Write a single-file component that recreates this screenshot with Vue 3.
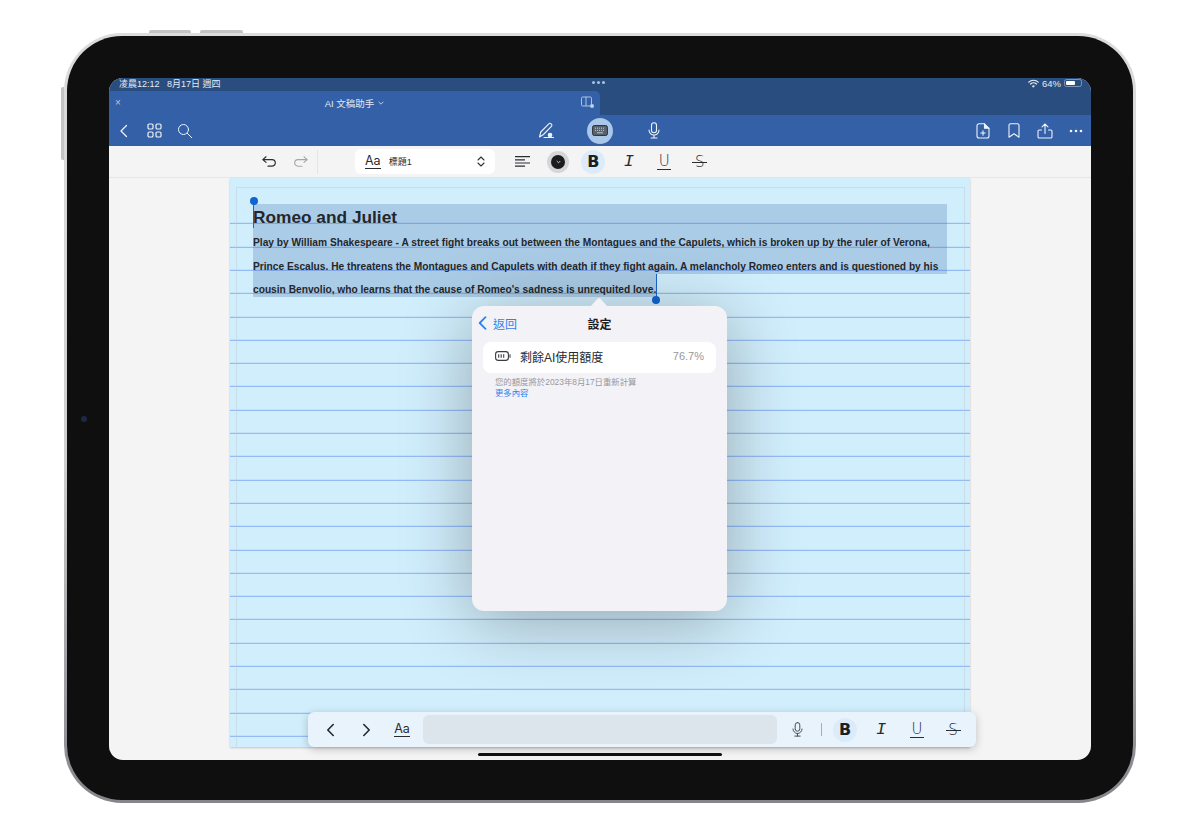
<template>
  <div class="device">
    <span class="hw hw-top hw-a"></span>
    <span class="hw hw-top hw-b"></span>
    <span class="hw hw-side"></span>
    <div class="bezel">
      <span class="camera"></span>
      <div class="screen">
        <!-- status bar -->
        <div class="status">
          <span class="status-left">凌晨12:12&nbsp;&nbsp;&nbsp;8月17日 週四</span>
          <span class="status-dots"><i></i><i></i><i></i></span>
          <span class="status-right">
            <svg width="11" height="9" viewBox="0 0 11 9" fill="none" stroke="#e8eef8" stroke-linecap="round">
              <path d="M.8 3.2a6.6 6.6 0 0 1 9.4 0" stroke-width="1.2" />
              <path d="M2.6 5a4 4 0 0 1 5.8 0" stroke-width="1.2" />
              <path d="M4.6 6.9a1.3 1.3 0 0 1 1.8 0L5.5 8z" fill="#e8eef8" stroke-width=".8" />
            </svg>
            <span class="pct">64%</span>
            <span class="battery"><b></b></span>
          </span>
        </div>

        <!-- window tab -->
        <div class="tabs">
          <div class="tab">
            <span class="tab-close">×</span>
            <span class="tab-title">
              AI 文稿助手
              <svg width="6" height="4" viewBox="0 0 6 4" fill="none" stroke="#cdd9ec" stroke-width=".9"><path d="M.6.8 3 3.2 5.4.8" /></svg>
            </span>
            <svg class="tab-split" width="14" height="13" viewBox="0 0 14 13" fill="none" stroke="#bccfe8" stroke-width=".9">
              <rect x=".5" y="1" width="10" height="9" rx="1.2" />
              <path d="M5 1v9" />
              <circle cx="11" cy="10" r="2" fill="#bccfe8" stroke="none" />
            </svg>
          </div>
        </div>

        <!-- main toolbar -->
        <div class="toolbar">
          <div class="tb-group tb-left">
            <span class="tb-btn">
              <svg width="10" height="14" viewBox="0 0 10 14" fill="none" stroke="#eef3fa" stroke-width="1.3" stroke-linecap="round" stroke-linejoin="round"><path d="M7.5 1.5 2 7l5.500 5.500" /></svg>
            </span>
            <span class="tb-btn">
              <svg width="15" height="15" viewBox="0 0 15 15" fill="none" stroke="#eef3fa" stroke-width="1.2">
                <rect x="1" y="1" width="5" height="5" rx="1.300" />
                <rect x="9" y="1" width="5" height="5" rx="1.300" />
                <rect x="1" y="9" width="5" height="5" rx="1.300" />
                <rect x="9" y="9" width="5" height="5" rx="1.300" />
              </svg>
            </span>
            <span class="tb-btn">
              <svg width="16" height="16" viewBox="0 0 16 16" fill="none" stroke="#eef3fa" stroke-width="1" stroke-linecap="round"><circle cx="6.500" cy="6.500" r="5" /><path d="m10.300 10.300 4.500 4.500" /></svg>
            </span>
          </div>
          <div class="tb-center">
            <span class="tb-mid">
              <svg width="17" height="17" viewBox="0 0 17 17" fill="none" stroke="#eef3fa" stroke-width="1.100" stroke-linejoin="round" stroke-linecap="round">
                <path d="M1.500 15 2.800 10 10.800 1.800a1.600 1.600 0 0 1 2.300 0l.3.300a1.600 1.600 0 0 1 0 2.300L5.500 12.500z" />
                <path d="M6 15.500h9.500" />
                <circle cx="12" cy="13" r="1.800" fill="#eef3fa" />
              </svg>
            </span>
            <span class="tb-mid">
              <span class="kbd-circle">
                <svg width="16" height="11" viewBox="0 0 16 11">
                  <rect x=".6" y=".6" width="14.800" height="9.800" rx="1.600" fill="#5a6470" stroke="#2b2f36" stroke-width="1" />
                  <path d="M3 3.200h10M3 5.400h10" stroke="#c3c9d1" stroke-width="1" stroke-dasharray="1 1" />
                  <path d="M5 7.800h6" stroke="#c3c9d1" stroke-width=".9" />
                </svg>
              </span>
            </span>
            <span class="tb-mid">
              <svg width="12" height="17" viewBox="0 0 12 17" fill="none" stroke="#eef3fa" stroke-width="1.100" stroke-linecap="round">
                <rect x="3.500" y=".8" width="5" height="10" rx="2.500" />
                <path d="M1 8a5 5 0 0 0 10 0M6 13v3M3 16h6" />
              </svg>
            </span>
          </div>
          <div class="tb-group tb-right">
            <span class="tb-btn">
              <svg width="14" height="16" viewBox="0 0 14 16" fill="none" stroke="#eef3fa" stroke-width="1.100" stroke-linejoin="round" stroke-linecap="round">
                <path d="M3 .8h5.500L13 5.300V13a2 2 0 0 1-2 2H3a2 2 0 0 1-2-2V2.800a2 2 0 0 1 2-2z" />
                <path d="M8.500.8v4.500H13" fill="#eef3fa" />
                <path d="M7 7.800v4.400M4.800 10h4.400" />
              </svg>
            </span>
            <span class="tb-btn">
              <svg width="12" height="15" viewBox="0 0 12 15" fill="none" stroke="#eef3fa" stroke-width="1.100" stroke-linejoin="round"><path d="M2.500.8h7A1.500 1.500 0 0 1 11 2.300v11.900L6 10.800l-5 3.400V2.300A1.500 1.500 0 0 1 2.500.8z" /></svg>
            </span>
            <span class="tb-btn">
              <svg width="16" height="16" viewBox="0 0 16 16" fill="none" stroke="#eef3fa" stroke-width="1.100" stroke-linecap="round" stroke-linejoin="round"><path d="M4.500 7H2.300A1.300 1.300 0 0 0 1 8.300v5.400A1.300 1.300 0 0 0 2.300 15h11.400a1.300 1.300 0 0 0 1.300-1.300V8.300A1.300 1.300 0 0 0 13.700 7h-2.200M8 10.500V1M5 3.800 8 1l3 2.800" /></svg>
            </span>
            <span class="tb-btn">
              <svg width="14" height="4" viewBox="0 0 14 4" fill="#eef3fa"><circle cx="2" cy="2" r="1.300" /><circle cx="7" cy="2" r="1.300" /><circle cx="12" cy="2" r="1.300" /></svg>
            </span>
          </div>
        </div>

        <!-- formatting bar -->
        <div class="format">
          <span class="undo">
            <svg width="15" height="11" viewBox="0 0 15 11" fill="none" stroke="#2a2d32" stroke-width="1.200" stroke-linecap="round" stroke-linejoin="round"><path d="M4 .8.800 3.600 4 6.400M1 3.600h9a3.300 3.300 0 0 1 0 6.600H6" /></svg>
          </span>
          <span class="undo">
            <svg width="15" height="11" viewBox="0 0 15 11" fill="none" stroke="#a3a6aa" stroke-width="1.100" stroke-linecap="round" stroke-linejoin="round"><path d="M11 .8l3.200 2.800L11 6.400M14 3.600H5a3.300 3.300 0 0 0 0 6.600h4" /></svg>
          </span>
          <span class="fmt-divider"></span>
          <div class="style-picker">
            <span class="aa">Aa</span>
            <span class="style-name">標題1</span>
            <svg class="updown" width="8" height="11" viewBox="0 0 8 11" fill="none" stroke="#2f3237" stroke-width="1.100" stroke-linecap="round" stroke-linejoin="round"><path d="M1 4 4 1l3 3M1 7l3 3 3-3" /></svg>
          </div>
          <span class="fmt-cell">
            <svg width="15" height="11" viewBox="0 0 15 11" stroke="#2a2d32" stroke-width="1.200"><path d="M0 .6h15M0 3.800h10M0 7h15M0 10.200h10" /></svg>
          </span>
          <span class="fmt-cell">
            <span class="swatch"><span class="swatch-in">
              <svg width="5" height="4" viewBox="0 0 5 4" fill="none" stroke="#d8d8d8" stroke-width=".9"><path d="M.7 1 2.500 2.800 4.300 1" /></svg>
            </span></span>
          </span>
          <span v-for="m in marks" :key="m.cls" class="fmt-cell">
            <span class="mark" :class="m.cls">{{ m.text }}</span>
          </span>
        </div>

        <!-- document -->
        <div class="doc">
          <div class="paper">
            <span class="margin-frame"></span>
            <span class="sel sel-a"></span>
            <span class="sel sel-b"></span>
            <span class="caret caret-a"></span>
            <span class="caret caret-b"></span>
            <span class="handle handle-a"></span>
            <span class="handle handle-b"></span>
            <h1 class="doc-title">Romeo and Juliet</h1>
            <p class="doc-body">
              Play by William Shakespeare - A street fight breaks out between the Montagues and the Capulets, which is broken up by the ruler of Verona, Prince Escalus. He threatens the Montagues and Capulets with death if they fight again. A melancholy Romeo enters and is questioned by his cousin Benvolio, who learns that the cause of Romeo's sadness is unrequited love.
            </p>
          </div>

          <!-- settings popover -->
          <div class="popover">
            <span class="arrow"></span>
            <div class="pop-nav">
              <span class="pop-back">
                <svg width="9" height="14" viewBox="0 0 9 14" fill="none" stroke="#2f83ee" stroke-width="1.800" stroke-linecap="round" stroke-linejoin="round"><path d="M7.500 1.200 1.700 7l5.800 5.800" /></svg>
                返回
              </span>
              <span class="pop-title">設定</span>
            </div>
            <div class="pop-card">
              <svg width="16" height="10" viewBox="0 0 16 10" fill="none" stroke="#3c3c40">
                <rect x=".6" y=".6" width="12.800" height="8.800" rx="2.600" stroke-width="1.100" />
                <path d="M3.700 3.200v3.600M6.200 3.200v3.600M8.700 3.200v3.600" stroke-width="1.100" />
                <path d="M15 3.800v2.400" stroke-width="1.100" stroke-linecap="round" />
              </svg>
              <span class="pop-label">剩餘AI使用額度</span>
              <span class="pop-value">76.7%</span>
            </div>
            <p class="pop-note">您的額度將於2023年8月17日重新計算</p>
            <p class="pop-more">更多內容</p>
          </div>

          <!-- floating bottom toolbar -->
          <div class="float-bar">
            <span class="fb-cell">
              <svg width="9" height="14" viewBox="0 0 9 14" fill="none" stroke="#25282c" stroke-width="1.600" stroke-linecap="round" stroke-linejoin="round"><path d="M7.200 1.500 1.800 7l5.400 5.500" /></svg>
            </span>
            <span class="fb-cell">
              <svg width="9" height="14" viewBox="0 0 9 14" fill="none" stroke="#25282c" stroke-width="1.600" stroke-linecap="round" stroke-linejoin="round"><path d="M1.800 1.500 7.200 7l-5.400 5.500" /></svg>
            </span>
            <span class="fb-cell"><span class="aa">Aa</span></span>
            <span class="fb-input"></span>
            <span class="fb-cell fb-mic">
              <svg width="11" height="15" viewBox="0 0 11 15" fill="none" stroke="#4a4d52" stroke-width="1" stroke-linecap="round">
                <rect x="3.200" y=".6" width="4.600" height="8.600" rx="2.300" />
                <path d="M1 7a4.500 4.500 0 0 0 9 0M5.500 11.500v2.600M2.800 14.100h5.400" />
              </svg>
            </span>
            <span class="fb-divider"><i></i></span>
            <span v-for="m in marks" :key="m.cls" class="fb-cell">
              <span class="mark" :class="m.cls">{{ m.text }}</span>
            </span>
          </div>
          <span class="home-bar"></span>
        </div>
      </div>
    </div>
  </div>
</template>

<script setup>
const marks = [
  { cls: "bold", text: "B" },
  { cls: "italic", text: "I" },
  { cls: "under", text: "U" },
  { cls: "strike", text: "S" },
];
</script>

<style>
body {
  background: #fff;
}
</style>

<style scoped>
.device {
  position: relative;
  box-sizing: border-box;
  width: 1072px;
  height: 770px;
  margin: 33px 0 0 64px;
  padding: 3px;
  border-radius: 58px;
  background: linear-gradient(#dcdcde, #cfcfd1 55%, #85858a);
  font-family: "Liberation Sans", "Noto Sans CJK TC", sans-serif;
}
.hw {
  position: absolute;
  background: #c4c4c6;
}
.hw-top {
  top: -3px;
  height: 3px;
  border-radius: 2px 2px 0 0;
}
.hw-a {
  left: 85px;
  width: 42px;
}
.hw-b {
  left: 136px;
  width: 43px;
}
.hw-side {
  left: -3px;
  top: 54px;
  width: 3px;
  height: 73px;
  border-radius: 2px 0 0 2px;
}
.bezel {
  position: relative;
  box-sizing: border-box;
  height: 764px;
  padding: 42px 42px 40px;
  border-radius: 55px;
  background: #0f0f0f;
}
.camera {
  position: absolute;
  left: 14px;
  top: 380px;
  width: 6px;
  height: 6px;
  border-radius: 50%;
  background: #1b2a44;
}
.screen {
  display: flex;
  flex-direction: column;
  height: 682px;
  border-radius: 14px;
  overflow: hidden;
  background: #f4f4f5;
}

/* status bar */
.status {
  position: relative;
  display: flex;
  align-items: center;
  justify-content: space-between;
  box-sizing: border-box;
  height: 13px;
  padding: 0 9px 3px 10px;
  background: #2a4d80;
  color: #e4eaf4;
  font-size: 9px;
}
.status-dots {
  position: absolute;
  left: 483px;
  top: 3px;
  display: flex;
  gap: 2px;
}
.status-dots i {
  width: 3px;
  height: 3px;
  border-radius: 50%;
  background: #a9c0e0;
}
.status-right {
  display: flex;
  align-items: center;
  gap: 3px;
}
.pct {
  font-size: 9.500px;
}
.battery {
  display: block;
  box-sizing: border-box;
  width: 18px;
  height: 8px;
  padding: 1px;
  border: 1px solid #7e95ba;
  border-radius: 2.500px;
}
.battery b {
  display: block;
  width: 64%;
  height: 100%;
  border-radius: 1px;
  background: #fff;
}

/* tab row */
.tabs {
  height: 24px;
  background: #2a4d80;
}
.tab {
  position: relative;
  display: flex;
  align-items: center;
  justify-content: center;
  width: 491px;
  height: 24px;
  border-radius: 0 5px 0 0;
  background: #3360a6;
}
.tab-close {
  position: absolute;
  left: 6px;
  top: 6px;
  color: #b4c6e2;
  font-size: 10px;
}
.tab-title {
  display: flex;
  align-items: center;
  gap: 4px;
  color: #e2e9f5;
  font-size: 9.500px;
}
.tab-split {
  position: absolute;
  right: 5px;
  top: 5px;
}

/* main toolbar */
.toolbar {
  display: grid;
  grid-template-columns: 1fr auto 1fr;
  align-items: center;
  height: 31px;
  background: #3360a6;
}
.tb-group {
  display: flex;
  align-items: center;
}
.tb-left .tb-btn {
  width: 30.500px;
}
.tb-right {
  justify-content: flex-end;
}
.tb-btn {
  display: flex;
  align-items: center;
  justify-content: center;
  width: 31px;
  height: 31px;
}
.tb-center {
  display: flex;
}
.tb-mid {
  display: flex;
  align-items: center;
  justify-content: center;
  width: 54px;
  height: 31px;
}
.kbd-circle {
  display: flex;
  align-items: center;
  justify-content: center;
  width: 26px;
  height: 26px;
  border-radius: 50%;
  background: #a9c7e8;
}

/* formatting bar */
.format {
  display: flex;
  align-items: center;
  flex-shrink: 0;
  box-sizing: border-box;
  height: 32px;
  padding-left: 144.500px;
  border-bottom: 1px solid #e6e6e8;
  background: #f4f4f5;
}
.undo {
  display: flex;
  justify-content: center;
  width: 31px;
}
.fmt-divider {
  width: 1px;
  height: 24px;
  margin: 0 37px 0 1.500px;
  background: #e4e4e6;
}
.style-picker {
  display: flex;
  align-items: center;
  box-sizing: border-box;
  width: 140px;
  height: 25px;
  margin-right: 10px;
  padding: 0 10px;
  border-radius: 6px;
  background: #fff;
}
.aa {
  display: inline-block;
  padding-bottom: 1px;
  border-bottom: 1px solid #2a2c30;
  color: #2a2c30;
  font-family: Inter, "Liberation Sans", sans-serif;
  font-size: 12.500px;
  line-height: 12px;
}
.style-name {
  margin-left: 8px;
  color: #2a2c30;
  font-size: 9px;
}
.updown {
  margin-left: auto;
}
.fmt-cell {
  display: flex;
  align-items: center;
  justify-content: center;
  width: 35.400px;
  height: 31px;
}
.swatch {
  display: flex;
  align-items: center;
  justify-content: center;
  width: 22px;
  height: 22px;
  border-radius: 50%;
  background: #d6d6d8;
}
.swatch-in {
  display: flex;
  align-items: center;
  justify-content: center;
  width: 14px;
  height: 14px;
  border-radius: 50%;
  background: #1c1c1e;
}
.mark {
  position: relative;
  display: inline-flex;
  align-items: center;
  justify-content: center;
  color: #2a2c30;
}
.bold {
  width: 24px;
  height: 24px;
  border-radius: 50%;
  background: #dcebfa;
  color: #1c1e22;
  font-family: "DejaVu Sans", sans-serif;
  font-size: 16px;
  font-weight: 700;
}
.italic {
  font-family: "Liberation Mono", monospace;
  font-size: 17px;
  font-style: italic;
}
.under {
  box-sizing: border-box;
  width: 14px;
  height: 16px;
  border-bottom: 1px solid #2a2c30;
  font-family: "DejaVu Sans", sans-serif;
  font-size: 15px;
  font-weight: 300;
  line-height: 13px;
}
.strike {
  width: 15px;
  font-family: "DejaVu Sans", sans-serif;
  font-size: 15px;
  font-weight: 300;
}
.strike::after {
  content: "";
  position: absolute;
  left: 0;
  right: 0;
  top: 50%;
  height: 1px;
  background: #2a2c30;
}

/* document */
.doc {
  position: relative;
  flex: 1;
  min-height: 0;
  padding-left: 121px;
}
.paper {
  position: relative;
  box-sizing: border-box;
  width: 740px;
  height: 569px;
  padding: 26px 23px 0;
  background-color: #d1eefc;
  background-image: linear-gradient(#d1eefc, #d1eefc), repeating-linear-gradient(to bottom, #86aef4 0, #86aef4 1px, transparent 1px, transparent 23.300px);
  background-repeat: no-repeat, repeat;
  background-size: 100% 40px, auto;
  background-position: 0 0, 0 21.800px;
  box-shadow: 0 1px 2px rgba(0, 0, 0, 0.2);
}
.margin-frame {
  position: absolute;
  left: 6px;
  right: 5px;
  top: 9px;
  bottom: 0;
  border: 1px solid rgba(190, 205, 215, 0.5);
  border-bottom: 0;
}
.sel {
  position: absolute;
  left: 23px;
  background: rgba(60, 110, 170, 0.26);
}
.sel-a {
  top: 26px;
  width: 694px;
  height: 70px;
}
.sel-b {
  top: 96px;
  width: 403px;
  height: 23px;
}
.caret {
  position: absolute;
  width: 1px;
  background: #1a66d0;
}
.caret-a {
  left: 23px;
  top: 22px;
  height: 28px;
}
.caret-b {
  left: 426px;
  top: 96px;
  height: 26px;
}
.handle {
  position: absolute;
  width: 8px;
  height: 8px;
  border-radius: 50%;
  background: #0f66d2;
}
.handle-a {
  left: 19.500px;
  top: 19px;
}
.handle-b {
  left: 422px;
  top: 118px;
}
.doc-title,
.doc-body {
  position: relative;
  margin: 0;
  color: #23272b;
}
.doc-title {
  height: 27.400px;
  font-size: 17.300px;
  font-weight: 700;
  line-height: 27px;
}
.doc-body {
  width: 694px;
  font-size: 10.200px;
  font-weight: 700;
  line-height: 23.300px;
}

/* popover */
.popover {
  position: absolute;
  left: 363px;
  top: 128px;
  box-sizing: border-box;
  width: 255px;
  height: 305px;
  padding: 0 11px;
  border-radius: 12px;
  background: #f2f2f7;
  box-shadow: 0 10px 70px rgba(0, 0, 0, 0.3);
}
.arrow {
  position: absolute;
  left: 118px;
  top: -8px;
  width: 18px;
  height: 9px;
  background: #f2f2f7;
  clip-path: polygon(0 100%, 42% 8%, 50% 0, 58% 8%, 100% 100%);
}
.pop-nav {
  position: relative;
  display: flex;
  align-items: center;
  justify-content: center;
  box-sizing: border-box;
  height: 36px;
  padding-bottom: 2px;
}
.pop-back {
  position: absolute;
  left: -5px;
  display: flex;
  align-items: center;
  gap: 6px;
  color: #2f83ee;
  font-size: 12px;
}
.pop-title {
  color: #1c1c1e;
  font-size: 12px;
  font-weight: 700;
}
.pop-card {
  display: flex;
  align-items: center;
  box-sizing: border-box;
  height: 31px;
  padding: 0 12px 3px;
  border-radius: 8px;
  background: #fff;
}
.pop-label {
  margin-left: 9px;
  color: #2a2a2d;
  font-size: 12px;
}
.pop-value {
  margin-left: auto;
  color: #98989d;
  font-size: 11px;
}
.pop-note,
.pop-more {
  margin: 0 0 0 12px;
  font-size: 8.400px;
}
.pop-note {
  margin-top: 4px;
  color: #98989d;
  line-height: 11px;
}
.pop-more {
  color: #2f83ee;
  line-height: 11px;
}

/* floating bar */
.float-bar {
  position: absolute;
  left: 199px;
  top: 534px;
  display: flex;
  align-items: center;
  box-sizing: border-box;
  width: 668px;
  height: 35px;
  padding: 0 5px 0 4px;
  border-radius: 6px;
  background: #e8f3fc;
  box-shadow: 0 2px 8px rgba(0, 0, 0, 0.22);
}
.fb-cell {
  display: flex;
  flex-shrink: 0;
  align-items: center;
  justify-content: center;
  width: 36px;
  height: 35px;
}
.fb-input {
  flex-shrink: 0;
  width: 354px;
  height: 29px;
  margin: 0 2px 0 3px;
  border-radius: 6px;
  background: #dce4ec;
}
.fb-divider {
  display: flex;
  justify-content: center;
  width: 12px;
}
.fb-divider i {
  width: 1px;
  height: 13px;
  background: #a8adb3;
}
.home-bar {
  position: absolute;
  left: 369px;
  top: 575px;
  width: 244px;
  height: 3px;
  border-radius: 2px;
  background: #111;
}
</style>
